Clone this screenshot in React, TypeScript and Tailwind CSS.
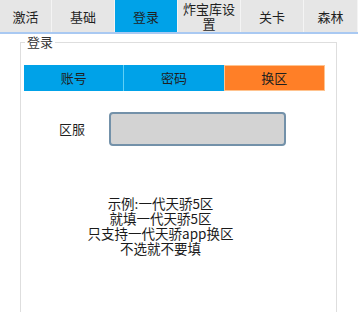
const tabs = [
  { label: "激活", w: "w-[52px]" },
  { label: "基础", w: "w-[63px]" },
  { label: "登录", w: "w-[63px]", active: true },
  { label: "炸宝库设置", w: "w-[63px]" },
  { label: "关卡", w: "w-[63px]" },
  { label: "森林", w: "w-[54px]" },
];

export default function App() {
  return (
    <div
      className="w-[358px] h-[312px] overflow-hidden bg-white text-[#1f1f1f]"
      style={{ fontFamily: '"Noto Sans CJK SC", "Noto Sans", sans-serif' }}
    >
      {/* tab strip */}
      <div className="flex h-[34px] border-b-2 border-[#a9c9f2] bg-[#e6e6e6]">
        {tabs.map((t) => (
          <div
            key={t.label}
            className={`${t.w} shrink-0 flex items-center justify-center text-center text-[13px] leading-[15px] px-[3px] border-r border-[#f4f4f4] ${
              t.active ? "bg-[#00a2e8]" : ""
            }`}
          >
            {t.label}
          </div>
        ))}
      </div>

      {/* group box */}
      <div className="relative ml-[20px] mt-[8px] w-[317px] h-[300px] border border-[#dedede] border-b-0">
        <span className="absolute -top-[9px] left-[4px] bg-white px-[2px] text-[13px] leading-[16px] text-[#333]">
          登录
        </span>

        <div className="flex mt-[22px] ml-[3px] w-[301px] h-[26px] text-[13px]">
          <div className="flex-1 flex items-center justify-center bg-[#00a2e8] border-r border-[#5fd0f5]">
            账号
          </div>
          <div className="flex-1 flex items-center justify-center bg-[#00a2e8]">
            密码
          </div>
          <div className="flex-1 flex items-center justify-center bg-[#ff7f27] border border-[#ffc38f]">
            换区
          </div>
        </div>

        <div className="flex items-center mt-[21px] h-[34px]">
          <span className="ml-[38px] w-[50px] text-[13px]">区服</span>
          <div className="w-[177px] h-[34px] rounded-[4px] border-2 border-[#7391a9] bg-[#d3d3d3]" />
        </div>

        <div className="mt-[50px] pr-[36px] flex flex-col items-center text-[13.5px] leading-[15px] text-[#1a1a1a]">
          <div>示例:一代天骄5区</div>
          <div>就填一代天骄5区</div>
          <div>只支持一代天骄app换区</div>
          <div>不选就不要填</div>
        </div>
      </div>
    </div>
  );
}
